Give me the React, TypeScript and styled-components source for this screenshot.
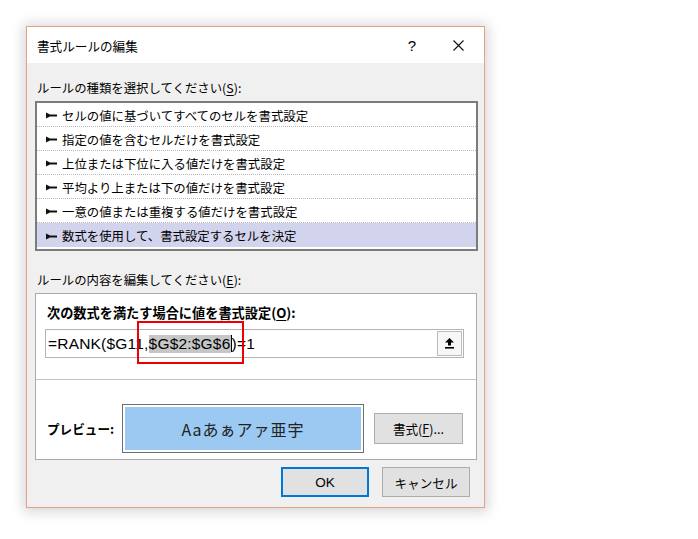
import React from "react";
import styled, { createGlobalStyle } from "styled-components";

const Global = createGlobalStyle`
  html, body { margin: 0; padding: 0; background: #ffffff; }
  body { font-family: "Noto Sans CJK JP", "Noto Sans", sans-serif; color: #000; }
`;

const Page = styled.div`
  position: relative;
  padding: 26px 0 0 26px;
  width: 698px;
  height: 539px;
  box-sizing: border-box;
`;

const Dialog = styled.div`
  width: 459px;
  height: 482px;
  box-sizing: border-box;
  border: 1px solid #e6a088;
  background: #f0f0f0;
  box-shadow: 0 1px 12px 3px rgba(0, 0, 0, 0.16);
  display: flex;
  flex-direction: column;
`;

const TitleBar = styled.div`
  height: 36px;
  flex: none;
  background: #ffffff;
  display: flex;
  align-items: center;
  padding: 0 3px 0 10px;
`;

const Title = styled.div`
  flex: 1;
  font-size: 12.6px;
  line-height: 18px;
  padding-top: 1px;
`;

const TitleButton = styled.div`
  width: 46px;
  height: 36px;
  display: flex;
  align-items: center;
  justify-content: center;
  font-family: "Liberation Sans", Arial, sans-serif;
  font-size: 15px;
`;

const Body = styled.div`
  flex: 1;
  display: flex;
  flex-direction: column;
  padding: 0 6px 0 8px;
`;

const Label = styled.div<{ $top: number }>`
  margin-top: ${(p) => p.$top}px;
  margin-left: 2px;
  font-size: 12.4px;
  line-height: 18px;
  height: 18px;
  white-space: nowrap;
`;

const Key = styled.span`
  text-decoration: underline;
  text-underline-offset: 2px;
`;

const ListBox = styled.div`
  margin-top: 4px;
  width: 443px;
  height: 150px;
  box-sizing: border-box;
  border: 2px solid #7c7c7c;
  background: #ffffff;
  display: flex;
  flex-direction: column;
`;

const Row = styled.div<{ $selected?: boolean; $last?: boolean }>`
  height: 24px;
  box-sizing: border-box;
  flex: none;
  display: flex;
  align-items: center;
  gap: 5px;
  padding: 2px 0 0 9px;
  font-size: 12.4px;
  white-space: nowrap;
  background: ${(p) => (p.$selected ? "#d2d3ec" : "transparent")};
  border-bottom: ${(p) => (p.$last ? "none" : "1px dotted #b8b8b8")};
`;

const Group = styled.div`
  margin-top: 4px;
  width: 442px;
  height: 167px;
  box-sizing: border-box;
  border: 1px solid #aaaaaa;
  background: #ffffff;
  display: flex;
  flex-direction: column;
`;

const GroupTop = styled.div`
  padding: 10px 12px 21px 9px;
  display: flex;
  flex-direction: column;
`;

const BoldLabel = styled.div`
  padding-left: 2px;
  font-size: 13.2px;
  font-weight: 700;
  line-height: 18px;
  height: 18px;
  white-space: nowrap;
`;

const FormulaBox = styled.div`
  margin-top: 7px;
  width: 419px;
  height: 29px;
  box-sizing: border-box;
  border: 1px solid #b4b4b4;
  display: flex;
  align-items: stretch;
`;

const FormulaText = styled.div`
  flex: 1;
  display: flex;
  align-items: center;
  padding-left: 2px;
  font-family: "Liberation Sans", Arial, sans-serif;
  font-size: 15.5px;
  letter-spacing: 0.2px;
  white-space: pre;
`;

const Selected = styled.span`
  background: #c6c6c6;
`;

const Caret = styled.span`
  display: inline-block;
  width: 1px;
  height: 17px;
  background: #000;
  vertical-align: middle;
`;

const CollapseButton = styled.div`
  width: 25px;
  margin: 1px;
  box-sizing: border-box;
  border: 1px solid #bcbcbc;
  background: #f7f7f7;
  display: flex;
  align-items: center;
  justify-content: center;
`;

const GroupBottom = styled.div`
  border-top: 1px solid #c4c4c4;
  padding: 24px 0 6px 11px;
  display: flex;
  align-items: center;
`;

const PreviewLabel = styled.div`
  width: 75px;
  font-size: 12.6px;
  font-weight: 700;
  white-space: nowrap;
`;

const PreviewFrame = styled.div`
  width: 242px;
  height: 49px;
  box-sizing: border-box;
  border: 1px solid #6e6e6e;
  padding: 2px;
  background: #ffffff;
  display: flex;
`;

const PreviewFill = styled.div`
  flex: 1;
  background: #9bc9f2;
  display: flex;
  align-items: center;
  justify-content: center;
  font-size: 16px;
  letter-spacing: 1px;
  color: #222;
  white-space: nowrap;
`;

const Button = styled.div<{ $default?: boolean; $w: number; $h: number }>`
  width: ${(p) => p.$w}px;
  height: ${(p) => p.$h}px;
  box-sizing: border-box;
  border: ${(p) => (p.$default ? "2px solid #0078d7" : "1px solid #adadad")};
  background: #e1e1e1;
  display: flex;
  align-items: center;
  justify-content: center;
  font-size: 12.6px;
  white-space: nowrap;
`;

const FormatButton = styled(Button)`
  margin-left: 10px;
`;

const Latin = styled.span`
  font-family: "Liberation Sans", Arial, sans-serif;
  font-size: 13.5px;
`;

const Footer = styled.div`
  margin-top: 7px;
  display: flex;
  justify-content: flex-end;
  gap: 13px;
  padding-right: 8px;
`;

const Annotation = styled.div`
  position: absolute;
  left: 137px;
  top: 321px;
  width: 107px;
  height: 43px;
  box-sizing: border-box;
  border: 2px solid #ee0000;
  pointer-events: none;
`;

const Arrow = () => (
  <svg width="11" height="7" viewBox="0 0 11 7">
    <path d="M0 0.5 L4 2.6 L11 2.6 L11 4.4 L4 4.4 L0 6.5 Z" fill="#111" />
  </svg>
);

const CloseIcon = () => (
  <svg width="11" height="11" viewBox="0 0 11 11">
    <path d="M0.5 0.5 L10.5 10.5 M10.5 0.5 L0.5 10.5" stroke="#111" strokeWidth="1.1" />
  </svg>
);

const UpIcon = () => (
  <svg width="9" height="11" viewBox="0 0 9 11">
    <path d="M4.5 0 L9 4.6 L6 4.6 L6 7.5 L3 7.5 L3 4.6 L0 4.6 Z" fill="#000" />
    <rect x="0" y="9" width="9" height="1.6" fill="#000" />
  </svg>
);

const rules = [
  "セルの値に基づいてすべてのセルを書式設定",
  "指定の値を含むセルだけを書式設定",
  "上位または下位に入る値だけを書式設定",
  "平均より上または下の値だけを書式設定",
  "一意の値または重複する値だけを書式設定",
  "数式を使用して、書式設定するセルを決定",
];

export default function App() {
  return (
    <Page>
      <Global />
      <Dialog>
        <TitleBar>
          <Title>書式ルールの編集</Title>
          <TitleButton>?</TitleButton>
          <TitleButton>
            <CloseIcon />
          </TitleButton>
        </TitleBar>
        <Body>
          <Label $top={16}>
            ルールの種類を選択してください(<Key>S</Key>):
          </Label>
          <ListBox>
            {rules.map((r, i) => (
              <Row key={r} $selected={i === rules.length - 1} $last={i === rules.length - 1}>
                <Arrow />
                <span>{r}</span>
              </Row>
            ))}
          </ListBox>
          <Label $top={20}>
            ルールの内容を編集してください(<Key>E</Key>):
          </Label>
          <Group>
            <GroupTop>
              <BoldLabel>
                次の数式を満たす場合に値を書式設定(<Key>O</Key>):
              </BoldLabel>
              <FormulaBox>
                <FormulaText>
                  =RANK($G11,<Selected>$G$2:$G$6</Selected>
                  <Caret />)=1
                </FormulaText>
                <CollapseButton>
                  <UpIcon />
                </CollapseButton>
              </FormulaBox>
            </GroupTop>
            <GroupBottom>
              <PreviewLabel>プレビュー:</PreviewLabel>
              <PreviewFrame>
                <PreviewFill>Aaあぁアァ亜宇</PreviewFill>
              </PreviewFrame>
              <FormatButton $w={89} $h={31}>
                書式(<Key>F</Key>)...
              </FormatButton>
            </GroupBottom>
          </Group>
          <Footer>
            <Button $default $w={88} $h={30}>
              <Latin>OK</Latin>
            </Button>
            <Button $w={88} $h={30}>
              キャンセル
            </Button>
          </Footer>
        </Body>
      </Dialog>
      <Annotation />
    </Page>
  );
}
